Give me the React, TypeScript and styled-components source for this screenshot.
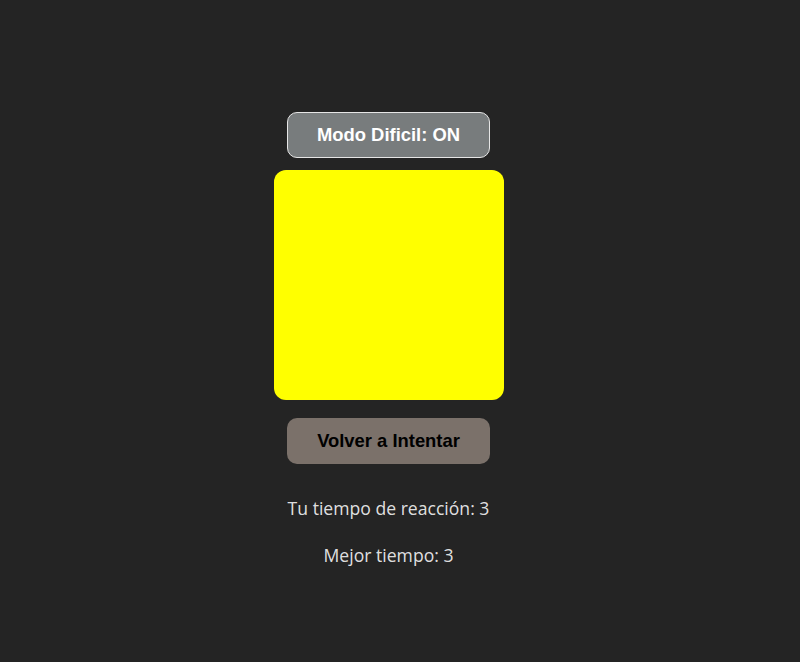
import React from "react";
import styled, { createGlobalStyle } from "styled-components";

const Global = createGlobalStyle`
  html, body { margin: 0; padding: 0; background: #242424; }
  body { font-family: "Open Sans", "Noto Sans", sans-serif; color: rgba(255,255,255,0.87); }
`;

const Page = styled.main`
  min-height: 662px;
  display: flex;
  flex-direction: column;
  align-items: center;
  padding: 112px 23px 0 0;
  box-sizing: border-box;
`;

const Button = styled.button<{ $variant: "toggle" | "retry" }>`
  width: 203px;
  height: 46px;
  box-sizing: border-box;
  border-radius: 10px;
  font-family: "Liberation Sans", Arial, sans-serif;
  font-weight: 700;
  font-size: 18.4px;
  cursor: pointer;
  padding: 0;
  border: 1px solid ${(p) => (p.$variant === "toggle" ? "#e6e6e6" : "transparent")};
  background: ${(p) => (p.$variant === "toggle" ? "#787c7d" : "#7b716a")};
  color: ${(p) => (p.$variant === "toggle" ? "#ffffff" : "#000000")};
`;

const Square = styled.div`
  width: 230px;
  height: 230px;
  border-radius: 12px;
  background: #ffff00;
  margin: 12px 0 18px;
`;

const Stat = styled.p<{ $gap: number }>`
  margin: ${(p) => p.$gap}px 0 0;
  font-size: 17.6px;
  line-height: 24px;
`;

export default function App() {
  return (
    <>
      <Global />
      <Page>
        <Button $variant="toggle">Modo Dificil: ON</Button>
        <Square />
        <Button $variant="retry">Volver a Intentar</Button>
        <Stat $gap={32}>Tu tiempo de reacción: 3</Stat>
        <Stat $gap={23}>Mejor tiempo: 3</Stat>
      </Page>
    </>
  );
}
